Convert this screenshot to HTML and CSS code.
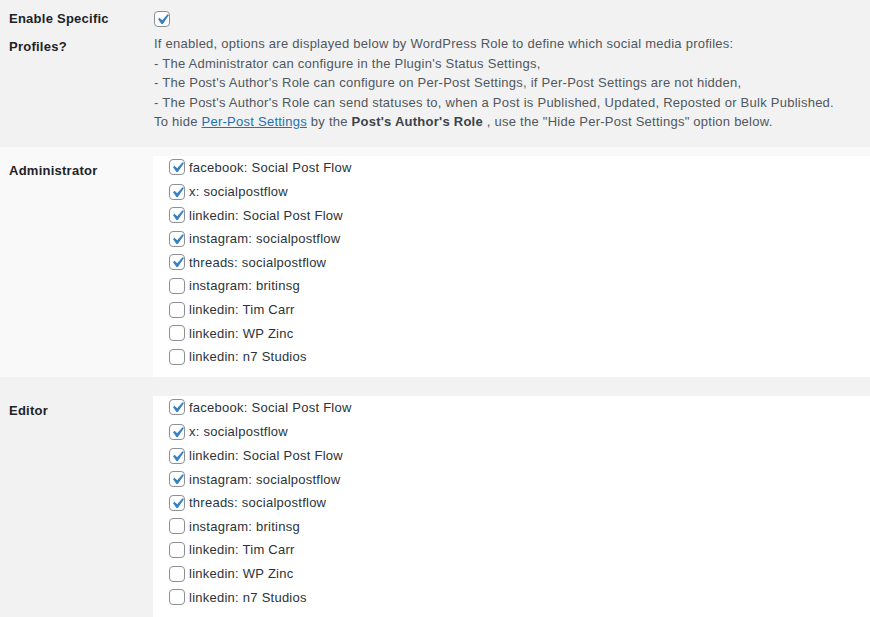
FILE: index.html
```html
<!DOCTYPE html>
<html>
<head>
  <title>Profiles by Role</title>
  <link rel="stylesheet" href="styles.css">
</head>
<body>

<div class="row row-grey first">
  <div class="label">Enable Specific<br>Profiles?</div>
  <div class="field">
    <span class="box checked"><svg viewBox="0 0 20 20"><path d="M14.83 4.89l1.34.94-5.810 8.38H9.02L5.78 9.67l1.34-1.25 2.57 2.4z"/></svg></span>
    <p class="description">
      If enabled, options are displayed below by WordPress Role to define which social media profiles:<br>
      - The Administrator can configure in the Plugin's Status Settings,<br>
      - The Post's Author's Role can configure on Per-Post Settings, if Per-Post Settings are not hidden,<br>
      - The Post's Author's Role can send statuses to, when a Post is Published, Updated, Reposted or Bulk Published.<br>
      To hide <a href="#">Per-Post Settings</a> by the <strong>Post's Author's Role</strong> , use the "Hide Per-Post Settings" option below.
    </p>
  </div>
</div>

<div class="row row-light">
  <div class="label">Administrator</div>
  <div class="field">
    <ul class="profiles">
      <li><span class="box checked"><svg viewBox="0 0 20 20"><path d="M14.83 4.89l1.34.94-5.81 8.38H9.02L5.78 9.67l1.34-1.25 2.57 2.4z"/></svg></span>facebook: Social Post Flow</li>
      <li><span class="box checked"><svg viewBox="0 0 20 20"><path d="M14.83 4.89l1.34.94-5.81 8.38H9.02L5.78 9.67l1.34-1.25 2.57 2.4z"/></svg></span>x: socialpostflow</li>
      <li><span class="box checked"><svg viewBox="0 0 20 20"><path d="M14.83 4.89l1.34.94-5.81 8.38H9.02L5.78 9.67l1.34-1.25 2.57 2.4z"/></svg></span>linkedin: Social Post Flow</li>
      <li><span class="box checked"><svg viewBox="0 0 20 20"><path d="M14.83 4.89l1.34.94-5.81 8.38H9.02L5.78 9.67l1.34-1.25 2.57 2.4z"/></svg></span>instagram: socialpostflow</li>
      <li><span class="box checked"><svg viewBox="0 0 20 20"><path d="M14.83 4.89l1.34.94-5.81 8.38H9.02L5.78 9.67l1.34-1.25 2.57 2.4z"/></svg></span>threads: socialpostflow</li>
      <li><span class="box"></span>instagram: britinsg</li>
      <li><span class="box"></span>linkedin: Tim Carr</li>
      <li><span class="box"></span>linkedin: WP Zinc</li>
      <li><span class="box"></span>linkedin: n7 Studios</li>
    </ul>
  </div>
</div>

<div class="row row-grey last">
  <div class="label">Editor</div>
  <div class="field">
    <ul class="profiles">
      <li><span class="box checked"><svg viewBox="0 0 20 20"><path d="M14.83 4.89l1.34.94-5.81 8.38H9.02L5.78 9.67l1.34-1.25 2.57 2.4z"/></svg></span>facebook: Social Post Flow</li>
      <li><span class="box checked"><svg viewBox="0 0 20 20"><path d="M14.83 4.89l1.34.94-5.81 8.38H9.02L5.78 9.67l1.34-1.25 2.57 2.4z"/></svg></span>x: socialpostflow</li>
      <li><span class="box checked"><svg viewBox="0 0 20 20"><path d="M14.83 4.89l1.34.94-5.81 8.38H9.02L5.78 9.67l1.34-1.25 2.57 2.4z"/></svg></span>linkedin: Social Post Flow</li>
      <li><span class="box checked"><svg viewBox="0 0 20 20"><path d="M14.83 4.89l1.34.94-5.81 8.38H9.02L5.78 9.67l1.34-1.25 2.57 2.4z"/></svg></span>instagram: socialpostflow</li>
      <li><span class="box checked"><svg viewBox="0 0 20 20"><path d="M14.83 4.89l1.34.94-5.81 8.38H9.02L5.78 9.67l1.34-1.25 2.57 2.4z"/></svg></span>threads: socialpostflow</li>
      <li><span class="box"></span>instagram: britinsg</li>
      <li><span class="box"></span>linkedin: Tim Carr</li>
      <li><span class="box"></span>linkedin: WP Zinc</li>
      <li><span class="box"></span>linkedin: n7 Studios</li>
    </ul>
  </div>
</div>

</body>
</html>
```

FILE: styles.css
```css
/* page */
body {
  margin: 0;
  background-color: #f2f2f2;
  font-family: "Liberation Sans", Arial, sans-serif;
  font-size: 13px;
  letter-spacing: 0.25px;
  color: #3c434a;
}

/* settings rows */
.row {
  display: flex;
}

.row-grey {
  background-color: #f2f2f2;
}

.row-light {
  background-color: #f9f9f9;
  padding-top: 10px;
}

.row.last {
  padding-top: 20px;
  min-height: 240px;
}

.label {
  width: 153px;
  flex-shrink: 0;
  box-sizing: border-box;
  padding: 0 0 0 9px;
  font-weight: bold;
  color: #1d2327;
  line-height: 28px;
}

.first .label {
  padding-top: 5px;
}

.field {
  flex: 1;
}

.first .field {
  padding: 11px 0 15px 1px;
}

/* checkbox */
.box {
  display: inline-block;
  box-sizing: border-box;
  width: 16px;
  height: 16px;
  border: 1px solid #8c8f94;
  border-radius: 4px;
  background: #fff;
  vertical-align: middle;
  position: relative;
}

.first .box {
  display: block;
}

.box svg {
  position: absolute;
  left: -3px;
  top: -3px;
  width: 21px;
  height: 21px;
  fill: #3582c4;
}

.description {
  margin: 7px 0 0;
  line-height: 19.5px;
  color: #50575e;
}

.description a {
  color: #2271b1;
}

.description strong {
  color: #3c434a;
}

/* profile list */
.profiles {
  list-style: none;
  margin: 0;
  padding: 0 0 8px 16px;
  background: #fff;
}

.profiles li {
  height: 23.6px;
  line-height: 23.6px;
  color: #2c3338;
}

.profiles li:first-child {
  margin-top: -1px;
  height: 24.6px;
}

.profiles .box {
  margin: -2px 4px 0 0;
}
```
